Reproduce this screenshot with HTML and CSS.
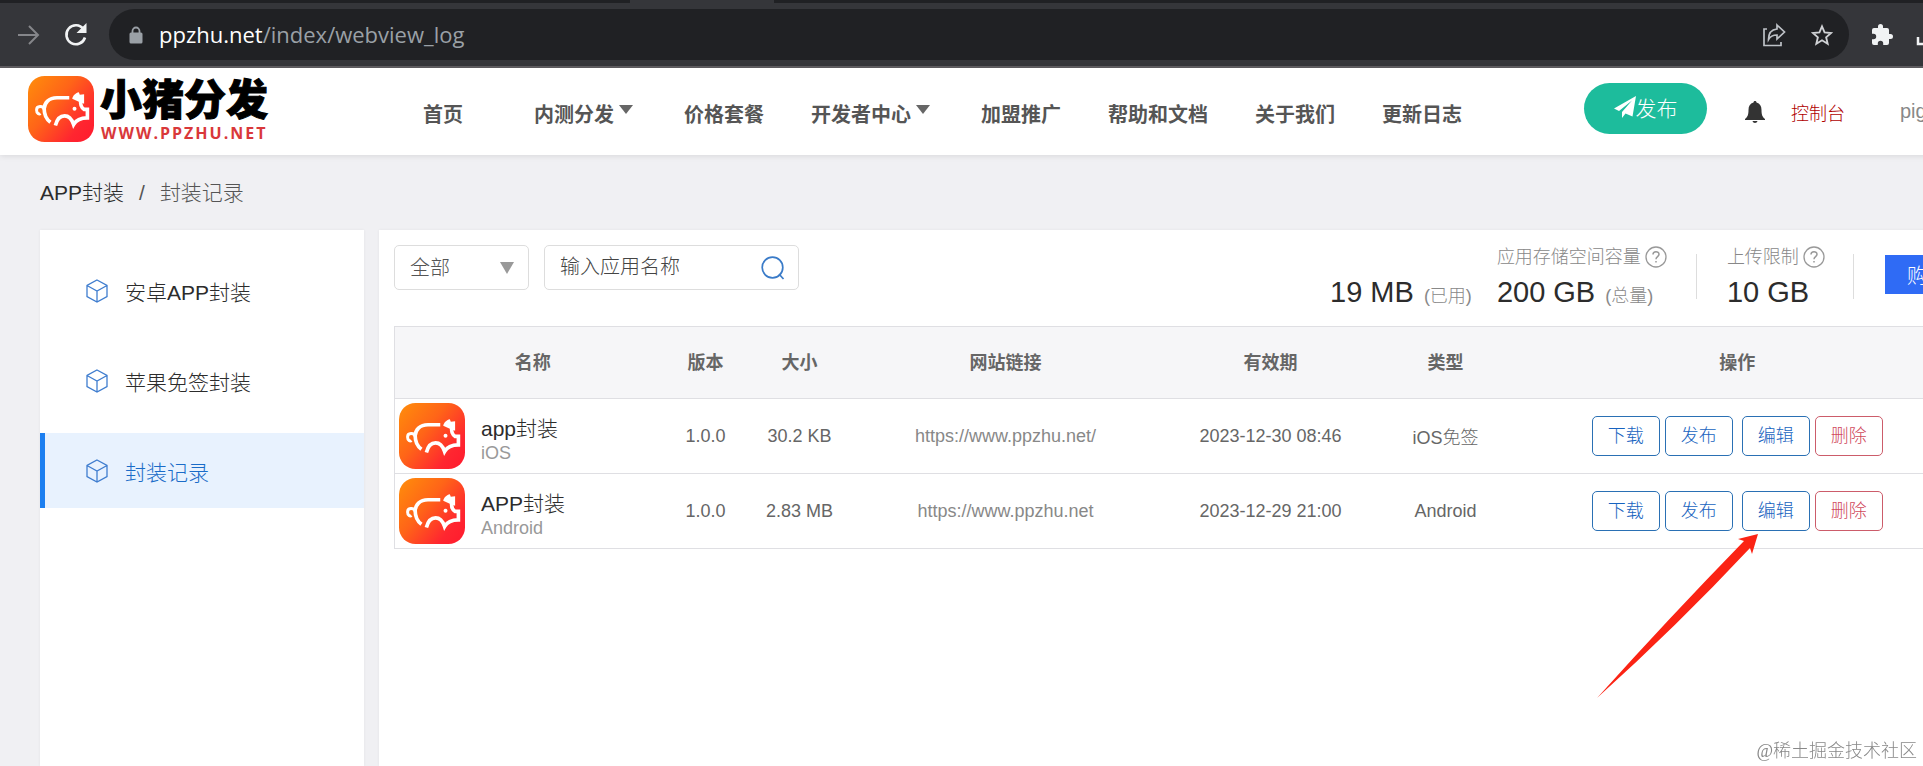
FILE: index.html
```html
<!DOCTYPE html>
<html lang="zh-CN">
  <head>
    <meta charset="utf-8" />
    <title>封装记录</title>
    <link rel="stylesheet" href="styles.css">
  </head>
  <body>
    <svg class="defs" aria-hidden="true">
      <defs>
        <linearGradient id="pigBg" x1="0" y1="0.1" x2="1" y2="0.9">
          <stop offset="0" stop-color="#ff8a0c"/>
          <stop offset="0.4" stop-color="#ff6418"/>
          <stop offset="0.8" stop-color="#ff2630"/>
          <stop offset="1" stop-color="#ff1c2e"/>
        </linearGradient>
        <symbol id="pig" viewBox="0 0 200 200">
          <rect width="200" height="200" rx="50" fill="url(#pigBg)"/>
          <g fill="none" stroke="#fff" stroke-width="11">
            <path d="M125 66H88C62 66 50 82 49 99C49 118 56 131 68 140"/>
            <path d="M50 103C46 88 26 90 26 103C26 114 34 117 38 114" stroke-width="9"/>
            <path d="M83 150C88 130 98 121 111 121C124 121 133 132 138 147C146 133 158 127 180 127V101H170C160 95 158 86 160 74"/>
          </g>
          <path d="M134 69C136 58 145 51 154 49L157 57L170 55V84L154 78Z" fill="#fff"/>
          <circle cx="141" cy="99" r="6" fill="#fff"/>
        </symbol>
        <symbol id="cube" viewBox="0 0 24 24">
          <path d="M12 1L22 6.500V17.500L12 23L2 17.500V6.500ZM2 6.500L12 12L22 6.500M12 12V23" fill="none" stroke="#3f7dcf" stroke-width="1.300"/>
        </symbol>
        <symbol id="help" viewBox="0 0 22 22">
          <circle cx="11" cy="11" r="10" fill="none" stroke="#999" stroke-width="1.300"/>
          <path d="M8 8.500C8 4.800 14 4.800 14 8.300C14 10.600 11 10.600 11 13.300M11 15V16.600" fill="none" stroke="#999" stroke-width="1.500"/>
        </symbol>
      </defs>
    </svg>

    <!-- browser bar -->
    <div class="browser">
      <div class="tabs"><span></span><span class="tab-on"></span><span></span></div>
      <div class="toolbar">
        <svg class="forward" viewBox="0 0 24 24" width="24" height="24"><path d="M1 12H20M12 3L21 12L12 21" fill="none" stroke="#85868a" stroke-width="2"/></svg>
        <svg class="reload" viewBox="0 0 24 24" width="24" height="24"><path d="M19.500 6A9.500 9.500 0 1 0 21 14.500" fill="none" stroke="#f1f3f4" stroke-width="2.600"/><path d="M22.500 0V10H12.500Z" fill="#f1f3f4"/></svg>
        <div class="address">
          <svg viewBox="0 0 14 18" width="14" height="18"><path d="M3.500 8V5A3.500 3.500 0 0 1 10.500 5V8" fill="none" stroke="#9aa0a6" stroke-width="1.800"/><rect x="0.500" y="6.500" width="13" height="11" rx="1.500" fill="#9aa0a6"/></svg>
          <div class="url"><span>ppzhu.net</span>/index/webview_log</div>
          <svg viewBox="0 0 24 24" width="24" height="24"><path d="M5 6H2V22.500H19V19" fill="none" stroke="#bdc1c6" stroke-width="1.700"/><path d="M15 2L22.500 9L15 16V12C11 12 8.500 13 6.500 16.500C6.500 10 10 6.500 15 6Z" fill="none" stroke="#bdc1c6" stroke-width="1.700"/></svg>
          <svg class="star" viewBox="0 0 24 24" width="22" height="24"><path d="M12 2.500L14.800 9.200L22 9.800L16.500 14.500L18.200 21.700L12 17.800L5.800 21.700L7.500 14.500L2 9.800L9.200 9.200Z" fill="none" stroke="#d0d2d5" stroke-width="2"/></svg>
        </div>
        <svg class="ext" viewBox="0 0 24 24" width="24" height="24"><path d="M20.500 11H19V7a2 2 0 0 0-2-2h-4V3.500a2.500 2.500 0 0 0-5 0V5H4a2 2 0 0 0-2 2v3.800h1.500a2.700 2.700 0 0 1 0 5.400H2V20a2 2 0 0 0 2 2h3.800v-1.500a2.700 2.700 0 0 1 5.400 0V22H17a2 2 0 0 0 2-2v-4h1.500a2.500 2.500 0 0 0 0-5Z" fill="#f1f3f4"/></svg>
        <svg class="download" viewBox="0 0 22 22" width="22" height="22"><path d="M2 13V20H20V13" fill="none" stroke="#f1f3f4" stroke-width="2.500"/></svg>
      </div>
    </div>

    <!-- site header -->
    <header class="header">
      <a class="logo" href="#">
        <svg width="66" height="66"><use href="#pig"/></svg>
        <div class="logo-text">
          <div class="logo-name">小猪分发</div>
          <div class="logo-site">WWW.PPZHU.NET</div>
        </div>
      </a>
      <nav class="nav">
        <a class="home" href="#">首页</a>
        <a href="#">内测分发<i class="caret"></i></a>
        <a href="#">价格套餐</a>
        <a href="#">开发者中心<i class="caret"></i></a>
        <a href="#">加盟推广</a>
        <a href="#">帮助和文档</a>
        <a href="#">关于我们</a>
        <a href="#">更新日志</a>
      </nav>
      <button class="publish" type="button">
        <svg viewBox="0 0 22 22" width="22" height="22"><path d="M22 0L0 12.500L5 15L18 4.500L8 16V22L11.500 17.500L18.500 20.500Z" fill="#fff"/></svg>发布
      </button>
      <div class="account">
        <svg viewBox="0 0 20 22" width="20" height="22"><path d="M10 0C11 0 11.500 0.700 11.500 1.500C15 2.500 16.500 5 16.500 9C16.500 14 17.500 16 20 18V19H0V18C2.500 16 3.500 14 3.500 9C3.500 5 5 2.500 8.500 1.500C8.500 0.700 9 0 10 0ZM7.500 20H12.500C12 22.500 8 22.500 7.500 20Z" fill="#333"/></svg>
        <a class="console" href="#">控制台</a>
        <a class="user" href="#">pig</a>
      </div>
    </header>

    <div class="crumbs"><a href="#">APP封装</a><span>/</span><span>封装记录</span></div>

    <div class="layout">
      <aside class="side">
        <a href="#"><svg width="24" height="24"><use href="#cube"/></svg>安卓APP封装</a>
        <a href="#"><svg width="24" height="24"><use href="#cube"/></svg>苹果免签封装</a>
        <a class="active" href="#"><svg width="24" height="24"><use href="#cube"/></svg>封装记录</a>
      </aside>

      <main class="main">
        <div class="tools">
          <div class="select-box">
            <select aria-label="类型">
              <option>全部</option>
            </select>
            <i class="caret"></i>
          </div>
          <div class="search">
            <input type="text" aria-label="应用名称" placeholder="输入应用名称">
            <svg viewBox="0 0 24 24" width="24" height="24"><circle cx="11.500" cy="11.500" r="10.300" fill="none" stroke="#3a7bc8" stroke-width="1.700"/><path d="M18 18L22.500 23" stroke="#3a7bc8" stroke-width="1.700"/></svg>
          </div>
          <div class="stats">
            <div class="stat">
              <div class="num">19 MB <small>(已用)</small></div>
            </div>
            <div class="stat storage">
              <div class="label">应用存储空间容量<svg width="22" height="22"><use href="#help"/></svg></div>
              <div class="num">200 GB <small>(总量)</small></div>
            </div>
            <div class="stat limit">
              <div class="label">上传限制<svg width="22" height="22"><use href="#help"/></svg></div>
              <div class="num">10 GB</div>
            </div>
            <button class="buy" type="button">购买</button>
          </div>
        </div>

        <table class="list">
          <colgroup>
            <col class="c-name"><col class="c-ver"><col class="c-size"><col class="c-link"><col class="c-date"><col class="c-type"><col>
          </colgroup>
          <thead>
            <tr><th>名称</th><th>版本</th><th>大小</th><th>网站链接</th><th>有效期</th><th>类型</th><th>操作</th></tr>
          </thead>
          <tbody>
            <tr>
              <td>
                <div class="app">
                  <svg width="66" height="66"><use href="#pig"/></svg>
                  <div class="app-text"><div class="app-name">app封装</div><div class="app-os">iOS</div></div>
                </div>
              </td>
              <td>1.0.0</td>
              <td>30.2 KB</td>
              <td><a class="link" href="#">https://www.ppzhu.net/</a></td>
              <td>2023-12-30 08:46</td>
              <td>iOS免签</td>
              <td>
                <div class="ops">
                  <button type="button">下载</button>
                  <button type="button">发布</button>
                  <button class="edit" type="button">编辑</button>
                  <button class="del" type="button">删除</button>
                </div>
              </td>
            </tr>
            <tr>
              <td>
                <div class="app">
                  <svg width="66" height="66"><use href="#pig"/></svg>
                  <div class="app-text"><div class="app-name">APP封装</div><div class="app-os">Android</div></div>
                </div>
              </td>
              <td>1.0.0</td>
              <td>2.83 MB</td>
              <td><a class="link" href="#">https://www.ppzhu.net</a></td>
              <td>2023-12-29 21:00</td>
              <td>Android</td>
              <td>
                <div class="ops">
                  <button type="button">下载</button>
                  <button type="button">发布</button>
                  <button class="edit" type="button">编辑</button>
                  <button class="del" type="button">删除</button>
                  <!-- pointer to the edit button -->
                  <svg class="arrow" viewBox="0 0 162 164" width="162" height="164"><path d="M161 0L155 20L153 14Q80 92 0 164Q72 84 147 7L141 5Z" fill="#fb2314"/></svg>
                </div>
              </td>
            </tr>
          </tbody>
        </table>
      </main>
    </div>

    <div class="watermark">@稀土掘金技术社区</div>
  </body>
</html>
```

FILE: styles.css
```css
* {
  box-sizing: border-box;
}
html {
  height: 100%;
  overflow: hidden;
}
body {
  margin: 0;
  min-width: 1988px;
  height: 100vh;
  overflow: hidden;
  display: flex;
  flex-direction: column;
  background: #f0f0f3;
  color: #2c2c2c;
  font-family: "Liberation Sans", "Noto Sans CJK SC", sans-serif;
  font-size: 18px;
  font-weight: 300;
}
a {
  color: inherit;
  text-decoration: none;
}
button, input, select {
  font: inherit;
  color: inherit;
}
svg {
  flex: none;
  display: block;
}
.defs {
  position: absolute;
  width: 0;
  height: 0;
}

/* browser bar */
.browser {
  background: #35363a;
  border-bottom: 2px solid #5f5d61;
}
.tabs {
  display: grid;
  grid-template-columns: 630px 144px 1fr;
  height: 3px;
}
.tabs span {
  background: #202124;
}
.tabs .tab-on {
  background: #35363a;
}
.toolbar {
  display: flex;
  align-items: center;
  height: 63px;
  padding-left: 17px;
}
.reload {
  margin: 0 21px 0 23px;
}
.address {
  display: flex;
  align-items: center;
  width: 1740px;
  height: 51px;
  padding: 0 16px 0 20px;
  border-radius: 26px;
  background: #202124;
}
.url {
  flex: 1;
  margin-left: 16px;
  padding-bottom: 2px;
  color: #9aa0a6;
  font-family: "Open Sans", sans-serif;
  font-size: 22px;
  font-weight: 400;
}
.url span {
  color: #fff;
}
.star {
  margin-left: 25px;
}
.ext {
  margin: 0 22px 0 21px;
}

/* header */
.header {
  display: flex;
  align-items: center;
  height: 87px;
  background: #fff;
  box-shadow: 0 1px 6px rgba(0, 0, 0, 0.1);
  white-space: nowrap;
}
.logo {
  flex: none;
  display: flex;
  align-items: center;
  gap: 6px;
  width: 423px;
  padding: 0 0 6px 28px;
}
.logo-name {
  color: #000;
  font-size: 42px;
  font-weight: 900;
  line-height: 48px;
  -webkit-text-stroke: 1px #000;
}
.logo-site {
  padding-left: 1px;
  color: #d9383a;
  font-family: "Open Sans", sans-serif;
  font-size: 16px;
  font-weight: 700;
  line-height: 16px;
  letter-spacing: 2px;
}
.nav {
  flex: none;
  display: flex;
  gap: 47px;
  width: 1161px;
  padding-top: 4px;
  color: #555;
  font-size: 20px;
  font-weight: 700;
}
.nav a {
  display: flex;
  align-items: center;
}
.nav .home {
  margin-right: 24px;
}
.caret {
  border: 7px solid transparent;
  border-top: 9px solid #666;
  border-bottom: 0;
}
.nav .caret {
  margin: 0 4px 8px 5px;
}
.publish {
  flex: none;
  display: flex;
  align-items: center;
  justify-content: center;
  width: 123px;
  height: 51px;
  margin-bottom: 6px;
  padding: 0 0 3px;
  border: 0;
  border-radius: 26px;
  background: #1dbc9c;
  color: #fff;
  font-size: 21px;
}
.account {
  display: flex;
  align-items: center;
  margin-left: 38px;
}
.console {
  margin: 0 55px 0 26px;
  color: #b00000;
}
.user {
  color: #888;
  font-size: 20px;
}

.crumbs {
  display: flex;
  gap: 15px;
  padding: 22px 40px;
  color: #555;
  font-size: 21px;
  line-height: 31px;
}
.crumbs a {
  color: #2c2c2c;
}

.layout {
  flex: 1;
  display: flex;
  gap: 15px;
  padding-left: 40px;
}

/* side menu */
.side {
  flex: none;
  display: flex;
  flex-direction: column;
  gap: 15px;
  width: 324px;
  padding-top: 23px;
  background: #fff;
  box-shadow: 0 0 3px rgba(0, 0, 0, 0.06);
}
.side a {
  display: flex;
  align-items: center;
  gap: 16px;
  height: 75px;
  padding-left: 40px;
  border-left: 5px solid transparent;
  font-size: 21px;
}
.side .active {
  border-left-color: #1c7ff0;
  background: #e8f2fe;
  color: #1a6cc8;
}

/* content */
.main {
  flex: 1;
  padding: 15px;
  background: #fff;
  box-shadow: 0 0 3px rgba(0, 0, 0, 0.06);
}
.tools {
  display: flex;
  gap: 15px;
  height: 81px;
}
.select-box, .search {
  display: flex;
  align-items: center;
  height: 45px;
  border: 1px solid #ddd;
  border-radius: 5px;
  color: #555;
  font-size: 20px;
}
.select-box {
  position: relative;
  width: 135px;
}
.select-box select {
  width: 100%;
  height: 100%;
  padding: 0 15px;
  border: 0;
  background: none;
  appearance: none;
}
.select-box .caret {
  position: absolute;
  right: 14px;
  border-top: 12px solid #999;
  pointer-events: none;
}
.search {
  width: 255px;
  padding: 0 13px 0 15px;
}
.search input {
  flex: 1;
  min-width: 0;
  padding: 0;
  border: 0;
  outline: 0;
  background: none;
}
.search input::placeholder {
  color: #444;
}
.stats {
  display: flex;
  align-items: flex-start;
  margin-left: 516px;
  white-space: nowrap;
}
.stat {
  display: flex;
  flex-direction: column;
  justify-content: flex-end;
  height: 70px;
}
.label {
  display: flex;
  align-items: center;
  gap: 4px;
  color: #888;
  line-height: 24px;
}
.num {
  font-size: 29px;
  line-height: 46px;
}
.num small {
  margin-left: 2px;
  color: #888;
  font-size: 18px;
  line-height: 18px;
}
.storage {
  margin-left: 25px;
}
.limit {
  margin-left: 29px;
  padding: 0 29px 0 31px;
  background: linear-gradient(#ddd, #ddd) 0 9px / 1px 45px no-repeat,
    linear-gradient(#ddd, #ddd) 100% 9px / 1px 45px no-repeat;
}
.buy {
  width: 84px;
  height: 39px;
  margin: 10px 0 0 31px;
  padding: 0;
  border: 0;
  background: #2f6bf5;
  color: #fff;
  font-size: 20px;
}

.list {
  width: 100%;
  border: 1px solid #dfdfe3;
  border-collapse: collapse;
  table-layout: fixed;
  color: #666;
  text-align: center;
}
.c-name { width: 276px; }
.c-ver { width: 70px; }
.c-size { width: 118px; }
.c-link { width: 294px; }
.c-date { width: 236px; }
.c-type { width: 114px; }
.list th {
  height: 72px;
  padding: 0 0 3px;
  background: #f6f6f8;
  font-weight: 700;
}
.list td {
  height: 75px;
  padding: 0;
  border-top: 1px solid #dfdfe3;
}
.link {
  color: #888;
}
.app {
  display: flex;
  align-items: center;
  gap: 16px;
  padding-left: 4px;
  text-align: left;
}
.app-text {
  padding-top: 7px;
}
.app-name {
  color: #2c2c2c;
  font-size: 21px;
  line-height: 26px;
}
.app-os {
  color: #999;
  line-height: 22px;
}
.ops {
  position: relative;
  display: flex;
  justify-content: center;
  gap: 5px;
}
.ops button {
  width: 68px;
  height: 40px;
  padding: 0 0 4px;
  border: 1px solid #2a70b4;
  border-radius: 5px;
  background: #fff;
  color: #1763c0;
}
.ops .edit {
  margin-left: 4px;
}
.ops .del {
  border-color: #cc5c6a;
  color: #d04a5c;
}
.arrow {
  position: absolute;
  top: 43px;
  left: 94px;
}
.watermark {
  position: fixed;
  right: 6px;
  bottom: 4px;
  color: #888;
  font-family: "Liberation Serif", "Noto Sans CJK SC", serif;
}
```
